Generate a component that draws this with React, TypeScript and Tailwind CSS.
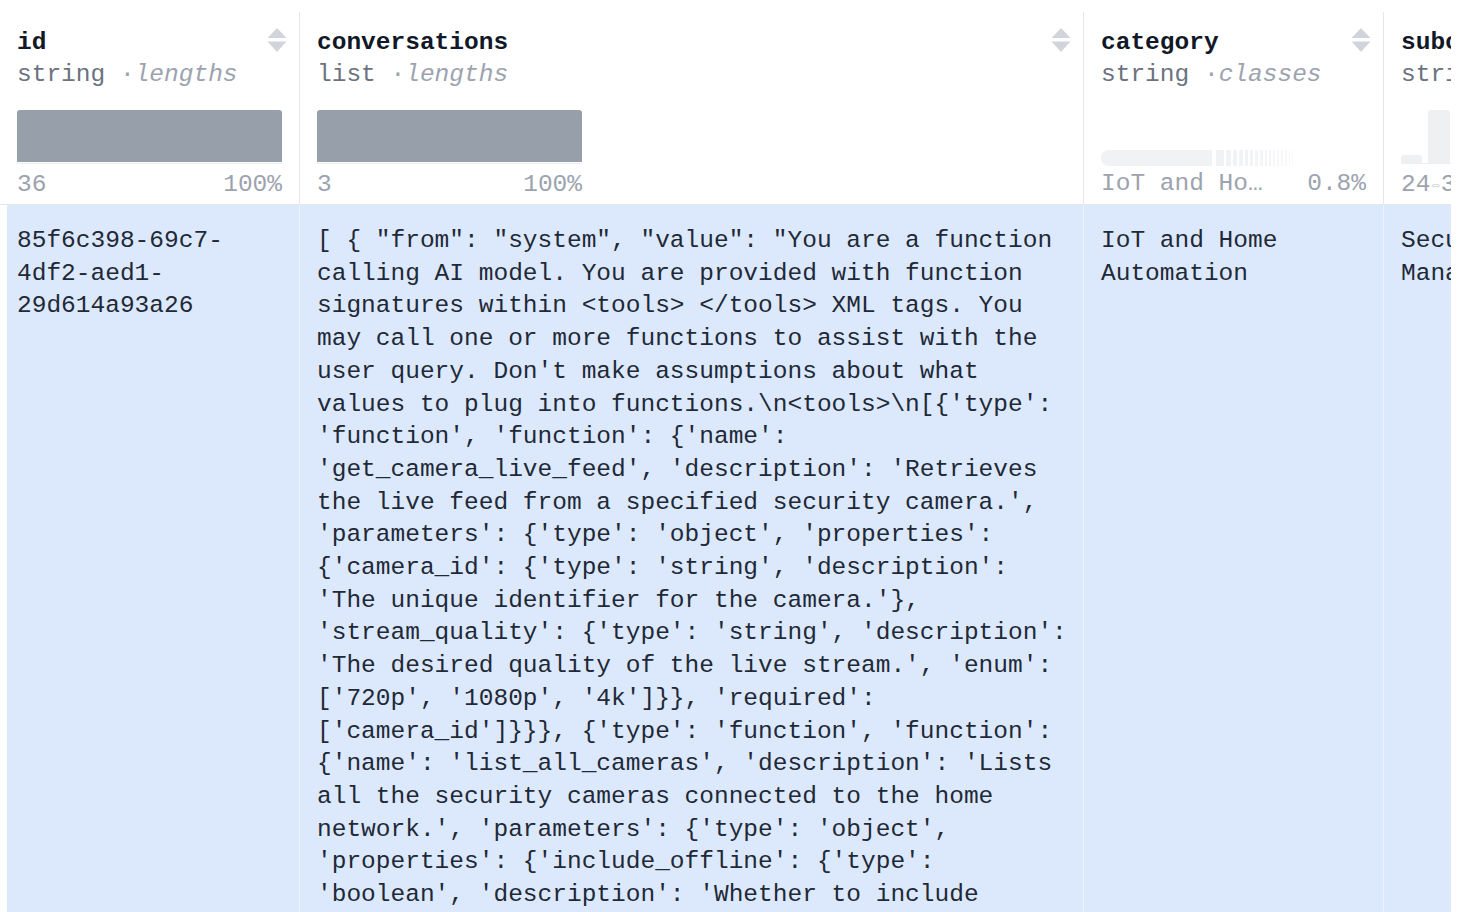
import React from 'react';

const mono = { fontFamily: '"Liberation Mono", "DejaVu Sans Mono", monospace' };

const SortIcon = () => (
  <svg width="20" height="25" viewBox="0 0 20 25" className="shrink-0 mt-[1px]">
    <path d="M10 0 L19.5 10 L0.5 10 Z" fill="#d1d5db" />
    <path d="M0.5 13.5 L19.5 13.5 L10 24 Z" fill="#d1d5db" />
  </svg>
);

const conversation =
  `[ { "from": "system", "value": "You are a function calling AI model. You are provided with function signatures within <tools> </tools> XML tags. You may call one or more functions to assist with the user query. Don't make assumptions about what values to plug into functions.\\n<tools>\\n[{'type': 'function', 'function': {'name': 'get_camera_live_feed', 'description': 'Retrieves the live feed from a specified security camera.', 'parameters': {'type': 'object', 'properties': {'camera_id': {'type': 'string', 'description': 'The unique identifier for the camera.'}, 'stream_quality': {'type': 'string', 'description': 'The desired quality of the live stream.', 'enum': ['720p', '1080p', '4k']}}, 'required': ['camera_id']}}}, {'type': 'function', 'function': {'name': 'list_all_cameras', 'description': 'Lists all the security cameras connected to the home network.', 'parameters': {'type': 'object', 'properties': {'include_offline': {'type': 'boolean', 'description': 'Whether to include offline cameras in the list.', 'default': False}}, 'required': []}}}, {'type': 'function', 'function': {'name': 'record_camera_feed', 'description': 'Records the live feed from a specified camera for a given duration.'`;

// stripes after the main category bar (width px, opacity)
const stripes: [number, number][] = [
  [8, 1], [5, 1], [4, 1], [4, 0.95], [3, 0.9], [3, 0.9], [3, 0.85], [3, 0.8],
  [2, 0.8], [2, 0.75], [2, 0.7], [2, 0.65], [2, 0.6], [2, 0.5], [1, 0.45], [1, 0.4],
];

const HeaderCell = ({
  name,
  type,
  kind,
  width,
  children,
}: {
  name: string;
  type: string;
  kind: string;
  width: string;
  children: React.ReactNode;
}) => (
  <div className={`${width} shrink-0 border-r border-[#e5e7eb] pl-[17px] pr-[12px] pt-[14.5px]`}>
    <div className="flex items-start justify-between">
      <div className="leading-[32.7px] whitespace-nowrap">
        <div className="font-bold text-[#111827]">{name}</div>
        <div className="text-[#6b7280]">
          {type} <span className="text-[#9ca3af]">·</span>
          <span className="italic text-[#9ca3af]">{kind}</span>
        </div>
      </div>
      <SortIcon />
    </div>
    {children}
  </div>
);

const LengthHist = ({ min, pct }: { min: string; pct: string }) => (
  <div className="w-[265px] mt-[18px]">
    <div className="h-[52px] bg-[#979faa] rounded-t-[3px]" />
    <div className="h-px bg-[#eceef1] mt-[1.5px]" />
    <div className="flex justify-between leading-[32.7px] text-[#9ca3af] mt-[5px]">
      <span>{min}</span>
      <span>{pct}</span>
    </div>
  </div>
);

export default function App() {
  return (
    <div className="w-[1451px] h-[912px] overflow-hidden bg-white text-[24.5px]" style={mono}>
      {/* header */}
      <div className="flex pt-[12px] h-[205px] border-b border-[#e5e7eb] bg-white">
        <HeaderCell name="id" type="string" kind="lengths" width="w-[300px]">
          <LengthHist min="36" pct="100%" />
        </HeaderCell>
        <HeaderCell name="conversations" type="list" kind="lengths" width="w-[784px]">
          <LengthHist min="3" pct="100%" />
        </HeaderCell>
        <HeaderCell name="category" type="string" kind="classes" width="w-[300px]">
          <div className="w-[265px] mt-[18px]">
            <div className="h-[56px] flex items-end gap-[2px]">
              <div className="h-[16px] w-[111px] mr-[2px] bg-[#f1f2f4] rounded-l-full" />
              {stripes.map(([w, o], i) => (
                <div key={i} className="h-[16px] bg-[#f1f2f4]" style={{ width: w, opacity: o }} />
              ))}
            </div>
            <div className="flex justify-between leading-[32.7px] text-[#9ca3af] mt-[2px]">
              <span>IoT and Ho…</span>
              <span>0.8%</span>
            </div>
          </div>
        </HeaderCell>
        <HeaderCell name="subcategory" type="string" kind="lengths" width="w-[300px]">
          <div className="w-[265px] mt-[18px]">
            <div className="h-[53px] flex items-end gap-[6px]">
              <div className="h-[8px] w-[21px] bg-[#eef0f2] rounded-t-[3px]" />
              <div className="h-[53px] w-[22px] bg-[#eef0f2] rounded-t-[3px]" />
              <div className="h-[20px] w-[22px] bg-[#eef0f2] rounded-t-[3px]" />
            </div>
            <div className="h-px bg-[#eceef1]" />
            <div className="flex leading-[32.7px] text-[#9ca3af] whitespace-nowrap mt-[5px]">
              <span>24</span>
              <span className="text-[14px] text-[#c4c9d1] px-[1px]">⇔</span>
              <span>37</span>
            </div>
          </div>
        </HeaderCell>
      </div>

      {/* row */}
      <div className="flex leading-[32.7px] text-[#1f2937]">
        <div className="w-[300px] shrink-0 border-l-[7px] border-l-white border-r border-r-white/50 bg-[#dce9fc] pl-[10px] pr-[17px] pt-[20px] min-h-[800px]">
          85f6c398-<wbr />69c7-<wbr />4df2-<wbr />aed1-<wbr />29d614a93a26
        </div>
        <div className="w-[784px] shrink-0 border-r border-white/50 bg-[#dce9fc] pl-[17px] pt-[20px]">
          <div className="w-[756px]">{conversation}</div>
        </div>
        <div className="w-[300px] shrink-0 border-r border-white/50 bg-[#dce9fc] pl-[17px] pr-[17px] pt-[20px]">
          IoT and Home Automation
        </div>
        <div className="w-[300px] shrink-0 bg-[#dce9fc] pl-[17px] pr-[17px] pt-[20px]">
          Security Camera Management
        </div>
      </div>
    </div>
  );
}
